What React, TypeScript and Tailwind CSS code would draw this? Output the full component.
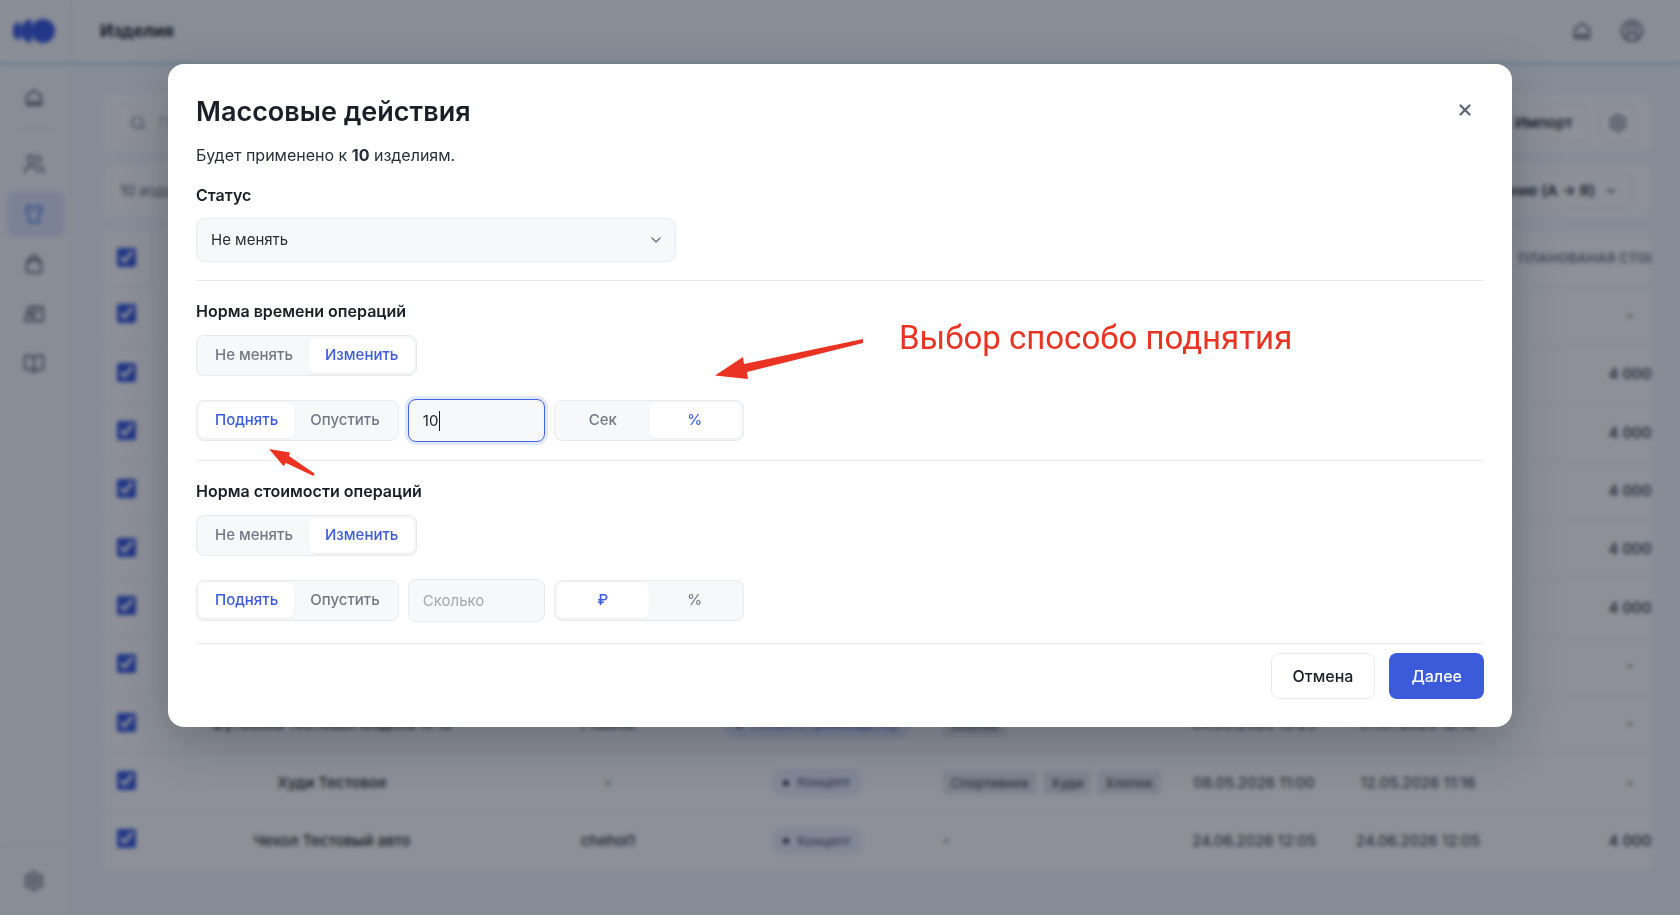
import { useId, useState } from "react";
import type { ReactNode } from "react";
import { BookOpen, ChevronDown, CircleUserRound, Search, Settings, Shirt, Users, X } from "lucide-react";

type Row = {
  name?: string;
  article?: string;
  status?: { label: string; ready?: boolean };
  tags?: string[];
  created?: string;
  updated?: string;
  cost: string;
};

const rows: Row[] = [
  { cost: "-" },
  { cost: "4 000" },
  { cost: "4 000" },
  { cost: "4 000" },
  { cost: "4 000" },
  { cost: "4 000" },
  { cost: "-" },
  {
    name: "Футболка Тестовая модель №10",
    article: "Fтавлю",
    status: { label: "Готово к производству", ready: true },
    tags: ["Хлопок"],
    created: "04.05.2026 15:25",
    updated: "01.07.2026 12:16",
    cost: "-",
  },
  {
    name: "Худи Тестовое",
    article: "-",
    status: { label: "Концепт" },
    tags: ["Спортивное", "Худи", "Хлопок"],
    created: "08.05.2026 11:00",
    updated: "12.05.2026 11:16",
    cost: "-",
  },
  {
    name: "Чехол Тестовый авто",
    article: "chehol1",
    status: { label: "Концепт" },
    tags: [],
    created: "24.06.2026 12:05",
    updated: "24.06.2026 12:05",
    cost: "4 000",
  },
];

function Logo() {
  return (
    <svg viewBox="0 0 42 26" className="h-[26px] w-[42px] fill-[#3355e0]" aria-hidden="true">
      <circle cx="30" cy="13" r="12" />
      <path d="M16.500 1c1.500 0 2 1 2 2.500v19c0 1.500-.5 2.500-2 2.500C12 23 7 18 7 13S12 3 16.500 1z" />
      <path d="M5.500 4c1 0 1.700.8 1.700 2v14c0 1.200-.7 2-1.700 2-4-1-5.500-4-5.500-9s1.500-8 5.500-9z" />
    </svg>
  );
}

function HomeIcon() {
  return (
    <svg viewBox="0 0 20 20" className="size-5 fill-none stroke-current" strokeWidth="2" strokeLinejoin="round" aria-hidden="true">
      <path d="M3 7.500 10 2.500l7 5 .5 9.500h-15z" />
      <path d="M6 17v-3h8v3" />
    </svg>
  );
}

function BagIcon() {
  return (
    <svg viewBox="0 0 20 20" className="size-5 fill-none stroke-current" strokeWidth="2" strokeLinecap="round" strokeLinejoin="round" aria-hidden="true">
      <path d="M5 6h10c1 0 1.500.5 1.700 1.500l.8 8c.1 1.800-.8 3-2.500 3H5c-1.700 0-2.600-1.200-2.500-3l.8-8C3.500 6.500 4 6 5 6z" />
      <path d="M6.500 8.500V5a3.500 3.500 0 0 1 7 0v3.500" />
    </svg>
  );
}

function ProductionIcon() {
  return (
    <svg viewBox="0 0 22 20" className="h-5 w-[22px] fill-none stroke-current" strokeWidth="1.8" strokeLinejoin="round" aria-hidden="true">
      <path d="M5.500 3H20v14H2z" />
      <path d="M11 3v14M4 10h7M14 9l3-3M8 7v6" />
    </svg>
  );
}

function NavLink({ label, active, children }: { label: string; active?: boolean; children: ReactNode }) {
  return (
    <a
      href="#"
      aria-label={label}
      className={
        active
          ? "flex h-[46px] w-[58px] items-center justify-center rounded-lg bg-[#dfe4fb] pr-[3px] text-[#3b6fe0]"
          : "flex h-[46px] w-[58px] items-center justify-center rounded-lg pr-[3px] text-[#5b6270]"
      }
    >
      {children}
    </a>
  );
}

function Checkbox({ label }: { label: string }) {
  return (
    <input
      type="checkbox"
      defaultChecked
      aria-label={label}
      className="block size-[19px] accent-[#3355e0]"
    />
  );
}

function ProductsPage() {
  return (
    <div className="flex h-full flex-col bg-[#f5f7fb]">
      <header className="flex h-[65px] shrink-0 items-center border-b-3 border-[#bfe0f2] bg-[#f8fafc]">
        <div className="flex h-full w-[72px] items-center border-r border-[#e8ebf1] pl-[13px]">
          <Logo />
        </div>
        <h1 className="pt-[2px] pl-7 text-[17px] font-bold text-[#1b1e27]">Изделия</h1>
        <div className="ml-auto flex items-center gap-7 pr-9 text-[#5b6270]">
          <HomeIcon />
          <CircleUserRound className="size-6" />
        </div>
      </header>
      <div className="flex min-h-0 grow">
        <nav className="flex w-[72px] shrink-0 flex-col items-center border-r border-[#e8ebf1] bg-[#f8f9fb] pt-[10px]">
          <NavLink label="Главная"><HomeIcon /></NavLink>
          <div className="my-2 w-8 border-t border-[#e8ebf0]" />
          <div className="flex flex-col gap-1 pt-[3px]">
            <NavLink label="Клиенты"><Users className="size-[22px]" /></NavLink>
            <NavLink label="Изделия" active><Shirt className="size-5" /></NavLink>
            <NavLink label="Заказы"><BagIcon /></NavLink>
            <NavLink label="Производство"><ProductionIcon /></NavLink>
            <NavLink label="Справка"><BookOpen className="size-[22px]" /></NavLink>
          </div>
          <div className="mt-auto flex h-[70px] w-full items-center justify-center border-t border-[#e8ebf0]">
            <NavLink label="Настройки"><Settings className="size-[22px]" /></NavLink>
          </div>
        </nav>
        <main className="flex min-w-0 grow flex-col gap-[14px] pt-[30px] pr-[29px] pl-8">
          <div className="flex h-14 shrink-0 items-center justify-between rounded-lg bg-white pr-[15px] pl-[13px]">
            <div className="flex h-[38px] w-80 items-center gap-3 rounded-lg border border-[#e8ebf1] px-3 text-[#6b7280]">
              <Search className="size-[18px]" />
              <input type="search" aria-label="Поиск" placeholder="Поиск" className="w-full text-[15px] outline-none" />
            </div>
            <div className="flex gap-3">
              <button type="button" className="h-[38px] rounded-lg border border-[#e8ebf1] px-[14px] text-[15px] font-semibold text-[#2a2e38]">Импорт</button>
              <button type="button" aria-label="Настройки таблицы" className="flex h-[38px] w-9 items-center justify-center rounded-lg border border-[#e8ebf1] text-[#5b6270]">
                <Settings className="size-5" />
              </button>
            </div>
          </div>
          <div className="flex h-[52px] shrink-0 items-center justify-between rounded-lg bg-white pr-[18px] pl-4">
            <span className="text-[15px] text-[#5b6270]">10 изделий</span>
            <button type="button" className="flex h-9 items-center gap-[9px] rounded-lg border border-[#e8ebf1] px-[14px] text-[15px] font-semibold text-[#2a2e38]">
              Название (А → Я)
              <ChevronDown className="size-[14px]" />
            </button>
          </div>
          <div className="shrink-0 overflow-hidden rounded-lg bg-white">
            <table className="h-[640px] w-[1656px] table-fixed border-collapse text-center text-[15px] font-medium text-[#2a2e38]">
              <colgroup>
                <col className="w-12" />
                <col className="w-[360px]" />
                <col className="w-48" />
                <col className="w-[226px]" />
                <col className="w-[242px]" />
                <col className="w-[164px]" />
                <col className="w-[164px]" />
                <col className="w-[260px]" />
              </colgroup>
              <thead>
                <tr className="h-14 border-b border-[#e0e4ea]">
                  <th className="border-r border-[#e0e4ea] pb-[3px] pl-[13px]"><Checkbox label="Выбрать все" /></th>
                  <th colSpan={6} />
                  <th className="pl-[18px] text-left text-[13px] font-semibold tracking-wide whitespace-nowrap text-[#6b7280] uppercase">Планованая стоимость</th>
                </tr>
              </thead>
              <tbody>
                {rows.map((row, i) => (
                  <tr key={i} className="h-[58px] border-b border-[#e8ebf1]">
                    <td className="pb-[5px] pl-[13px]"><Checkbox label={row.name ?? "Изделие"} /></td>
                    <td className="text-[#1b1e27]">{row.name}</td>
                    <td>{row.article}</td>
                    <td>
                      {row.status && (
                        <span
                          className={
                            row.status.ready
                              ? "inline-flex h-7 items-center gap-2 rounded-full bg-[#e2ebfc] px-3 text-[13px] font-medium text-[#4a6fd0]"
                              : "inline-flex h-7 items-center gap-2 rounded-full bg-[#eceffa] px-3 text-[13px] font-medium text-[#5b6180]"
                          }
                        >
                          <span className="size-[6px] rounded-full bg-[#2f3550]" />
                          {row.status.label}
                        </span>
                      )}
                    </td>
                    <td className="pl-[13px] text-left">
                      {row.tags && row.tags.length === 0 && "-"}
                      <span className="flex gap-[6px]">
                        {row.tags?.map((tag) => (
                          <span key={tag} className="rounded bg-[#e6e8ee] px-2 text-[13px] leading-6 font-medium text-[#454b5a]">{tag}</span>
                        ))}
                      </span>
                    </td>
                    <td className="font-normal">{row.created}</td>
                    <td className="font-normal">{row.updated}</td>
                    <td>{row.cost}</td>
                  </tr>
                ))}
              </tbody>
            </table>
          </div>
        </main>
      </div>
    </div>
  );
}

function Segmented({ label, options, initial, wide }: { label: string; options: string[]; initial: string; wide?: boolean }) {
  const [value, setValue] = useState(initial);
  return (
    <div role="group" aria-label={label} className="flex h-[41px] rounded-lg border border-[#e8eaee] bg-[#f7f8fa] p-[2px]">
      {options.map((option) => (
        <button
          key={option}
          type="button"
          aria-pressed={option === value}
          onClick={() => setValue(option)}
          className={
            (wide ? "w-[92px] " : "px-4 ") +
            (option === value
              ? "rounded-md bg-white text-[15px] font-medium text-[#3b5bdb] shadow-xs"
              : "rounded-md text-[15px] font-medium text-[#737885]")
          }
        >
          {option}
        </button>
      ))}
    </div>
  );
}

function NormSection({ title, units, unit, amount, focused }: { title: string; units: string[]; unit: string; amount?: string; focused?: boolean }) {
  return (
    <section className="flex flex-col items-start border-t border-[#e8eaee] pt-5">
      <h3 className="mb-[14px] text-base leading-5 font-semibold text-[#1b1e27]">{title}</h3>
      <Segmented label={title} options={["Не менять", "Изменить"]} initial="Изменить" />
      <div className="mt-[23px] mb-[18px] flex items-center gap-[9px]">
        <Segmented label="Направление" options={["Поднять", "Опустить"]} initial="Поднять" />
        <div className="relative">
          <input
            type="text"
            aria-label="Сколько"
            placeholder="Сколько"
            defaultValue={amount}
            autoFocus={focused}
            className="block h-[43px] w-[137px] rounded-lg border border-[#e8eaee] bg-[#f7f8fa] px-[14px] text-[15px] text-[#1b1e27] caret-transparent outline-none placeholder:text-[#a3a7b0] focus:border-[#4263eb] focus:ring-3 focus:ring-[#e3e8fc]"
          />
          {focused && <span className="pointer-events-none absolute top-3 left-[31px] h-5 w-px bg-[#1b1e27]" />}
        </div>
        <Segmented label="Единица" options={units} initial={unit} wide />
      </div>
    </section>
  );
}

function Annotations() {
  return (
    <div className="pointer-events-none absolute inset-0 text-[#eb3323]">
      <svg viewBox="0 0 148 40" className="absolute top-[275px] left-[547px] h-10 w-[148px] fill-current" aria-hidden="true">
        <path d="M0 36.500 28 18l1 7L148 0v4L32 33l1 7z" />
      </svg>
      <svg viewBox="0 0 46 29" className="absolute top-[385px] left-[101px] h-[29px] w-[46px] fill-current" aria-hidden="true">
        <path d="M0 0l21 3.500-1 3.500 25.500 17.500-1 2.500L17 14l-2.500 3z" />
      </svg>
      <p className="absolute top-[253px] left-[731px] font-['Roboto',sans-serif] text-[33px] leading-[42px] whitespace-nowrap">Выбор способо поднятия</p>
    </div>
  );
}

function BulkActionsDialog() {
  const titleId = useId();
  const statusId = useId();
  return (
    <div role="dialog" aria-modal="true" aria-labelledby={titleId} className="relative w-4/5 rounded-2xl bg-white px-7 pt-[30px] pb-7 shadow-[0_16px_48px_rgba(17,24,39,0.28)]">
      <div className="flex items-start justify-between">
        <h2 id={titleId} className="text-[27px] leading-9 font-semibold text-[#1b1e27]">Массовые действия</h2>
        <button type="button" aria-label="Закрыть" className="flex h-8 w-[38px] items-center justify-center text-[#5f6675]">
          <X className="size-[18px]" strokeWidth={3} />
        </button>
      </div>
      <p className="mt-[13px] text-base leading-6 text-[#2a2e38]">
        Будет применено к <b className="font-bold">10</b> изделиям.
      </p>
      <label htmlFor={statusId} className="mt-[18px] block text-base leading-5 font-semibold text-[#1b1e27]">Статус</label>
      <div className="relative mt-[13px] mb-[18px] w-[480px]">
        <select id={statusId} className="block h-11 w-full appearance-none rounded-lg border border-[#e8eaee] bg-[#f7f8fa] px-[14px] text-[15px] text-[#2a2e38]">
          <option>Не менять</option>
        </select>
        <ChevronDown className="pointer-events-none absolute top-[14px] right-3 size-4 text-[#6b7280]" />
      </div>
      <NormSection title="Норма времени операций" units={["Сек", "%"]} unit="%" amount="10" focused />
      <NormSection title="Норма стоимости операций" units={["₽", "%"]} unit="₽" />
      <div className="mt-[3px] flex justify-end gap-[14px] border-t border-[#e8eaee] pt-[9px]">
        <button type="button" className="h-[46px] rounded-lg border border-[#e8eaee] px-[21px] text-base font-medium text-[#1b1e27]">Отмена</button>
        <button type="button" className="h-[46px] rounded-lg bg-[#3b5bdb] px-[22px] text-base font-medium text-white">Далее</button>
      </div>
      <Annotations />
    </div>
  );
}

export default function App() {
  return (
    <div className="relative h-screen overflow-hidden font-['Inter',sans-serif]">
      <ProductsPage />
      <div className="absolute inset-0 flex items-start justify-center bg-[#111827]/48 pt-16 backdrop-blur-[2px]">
        <BulkActionsDialog />
      </div>
    </div>
  );
}
